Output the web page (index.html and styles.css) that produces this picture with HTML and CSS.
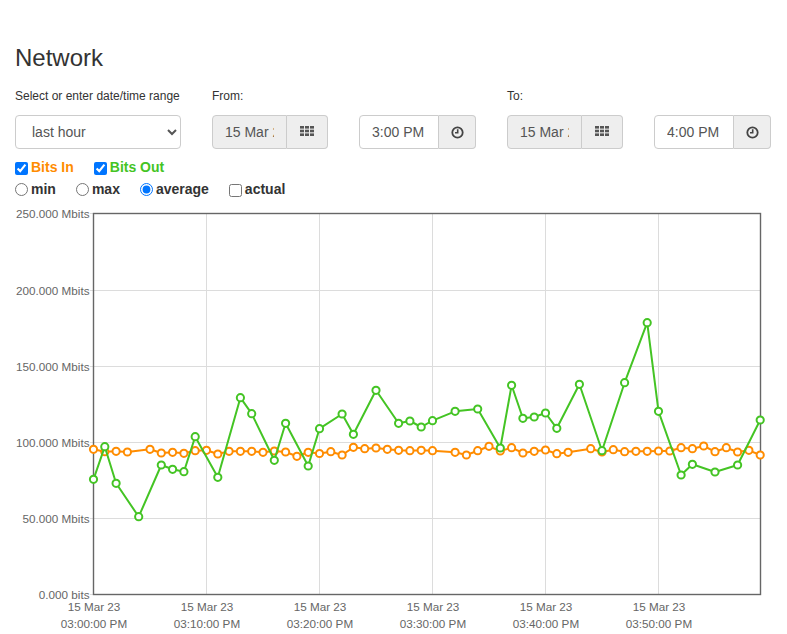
FILE: index.html
```html
<!DOCTYPE html>
<html>
<head>
<meta charset="utf-8">
<title>Network</title>
<link rel="stylesheet" href="styles.css">
</head>
<body>
<div class="page">
  <h1 class="title">Network</h1>
  <div class="controls">
    <div class="field">
      <label class="field-label">Select or enter date/time range</label>
      <select class="range-select">
        <option>last hour</option>
      </select>
    </div>
    <div class="field">
      <label class="field-label">From:</label>
      <div class="pair">
        <div class="igroup">
          <input class="date-input" type="text" value="15 Mar 2023" readonly>
          <span class="addon addon-date">
            <svg class="icon" width="14" height="10" viewBox="0 0 14 10"><g fill="#555"><rect x="0" y="0" width="4" height="2.6"/><rect x="5" y="0" width="4" height="2.6"/><rect x="10" y="0" width="4" height="2.6"/><rect x="0" y="3.7" width="4" height="2.6"/><rect x="5" y="3.7" width="4" height="2.6"/><rect x="10" y="3.7" width="4" height="2.6"/><rect x="0" y="7.4" width="4" height="2.6"/><rect x="5" y="7.4" width="4" height="2.6"/><rect x="10" y="7.4" width="4" height="2.6"/></g></svg>
          </span>
        </div>
        <div class="igroup">
          <input class="time-input" type="text" value="3:00 PM">
          <span class="addon addon-time">
            <svg class="icon" width="13" height="13" viewBox="0 0 13 13"><circle cx="6.5" cy="6.5" r="5.2" fill="none" stroke="#444" stroke-width="1.8"/><path d="M6.7 3.2 V6.8 H4" fill="none" stroke="#444" stroke-width="1.6"/></svg>
          </span>
        </div>
      </div>
    </div>
    <div class="field">
      <label class="field-label">To:</label>
      <div class="pair">
        <div class="igroup">
          <input class="date-input" type="text" value="15 Mar 2023" readonly>
          <span class="addon addon-date">
            <svg class="icon" width="14" height="10" viewBox="0 0 14 10"><g fill="#555"><rect x="0" y="0" width="4" height="2.6"/><rect x="5" y="0" width="4" height="2.6"/><rect x="10" y="0" width="4" height="2.6"/><rect x="0" y="3.7" width="4" height="2.6"/><rect x="5" y="3.7" width="4" height="2.6"/><rect x="10" y="3.7" width="4" height="2.6"/><rect x="0" y="7.4" width="4" height="2.6"/><rect x="5" y="7.4" width="4" height="2.6"/><rect x="10" y="7.4" width="4" height="2.6"/></g></svg>
          </span>
        </div>
        <div class="igroup">
          <input class="time-input" type="text" value="4:00 PM">
          <span class="addon addon-time">
            <svg class="icon" width="13" height="13" viewBox="0 0 13 13"><circle cx="6.5" cy="6.5" r="5.2" fill="none" stroke="#444" stroke-width="1.8"/><path d="M6.7 3.2 V6.8 H4" fill="none" stroke="#444" stroke-width="1.6"/></svg>
          </span>
        </div>
      </div>
    </div>
  </div>
  <div class="options">
    <div class="opt-row">
      <label class="opt"><input type="checkbox" class="cb" checked><span class="bits-in">Bits In</span></label>
      <label class="opt"><input type="checkbox" class="cb" checked><span class="bits-out">Bits Out</span></label>
    </div>
    <div class="opt-row">
      <label class="opt"><input type="radio" name="agg" class="rb"><span>min</span></label>
      <label class="opt"><input type="radio" name="agg" class="rb"><span>max</span></label>
      <label class="opt"><input type="radio" name="agg" class="rb" checked><span>average</span></label>
      <label class="opt"><input type="checkbox" class="cb"><span>actual</span></label>
    </div>
  </div>
</div>
<svg class="chart" width="787" height="433" viewBox="0 201 787 433">
  <defs>
    <marker id="mo" viewBox="-6 -6 12 12" markerWidth="12" markerHeight="12" refX="0" refY="0" markerUnits="userSpaceOnUse">
      <circle r="3.6" fill="#fff" stroke="#ff8c00" stroke-width="2"/>
    </marker>
    <marker id="mg" viewBox="-6 -6 12 12" markerWidth="12" markerHeight="12" refX="0" refY="0" markerUnits="userSpaceOnUse">
      <circle r="3.6" fill="#fff" stroke="#44c424" stroke-width="2"/>
    </marker>
  </defs>
  <g class="grid" stroke="#dcdcdc" stroke-width="1">
    <line x1="90" y1="290.5" x2="760" y2="290.5"/>
    <line x1="90" y1="366.5" x2="760" y2="366.5"/>
    <line x1="90" y1="442.5" x2="760" y2="442.5"/>
    <line x1="90" y1="518.5" x2="760" y2="518.5"/>
    <line x1="206.5" y1="214" x2="206.5" y2="594"/>
    <line x1="319.5" y1="214" x2="319.5" y2="594"/>
    <line x1="432.5" y1="214" x2="432.5" y2="594"/>
    <line x1="545.5" y1="214" x2="545.5" y2="594"/>
    <line x1="658.5" y1="214" x2="658.5" y2="594"/>
    <line x1="90" y1="213.5" x2="93" y2="213.5"/>
    <line x1="90" y1="594.5" x2="93" y2="594.5"/>
  </g>
  <rect x="93.5" y="213.5" width="667" height="381" fill="none" stroke="#666" stroke-width="1.4"/>
  <g class="ylabels" font-size="11.7" fill="#666" text-anchor="end">
    <text x="89.5" y="217.5">250.000 Mbits</text>
    <text x="89.5" y="294.5">200.000 Mbits</text>
    <text x="89.5" y="370.5">150.000 Mbits</text>
    <text x="89.5" y="446.5">100.000 Mbits</text>
    <text x="89.5" y="522.5">50.000 Mbits</text>
    <text x="89.5" y="598.5">0.000 bits</text>
  </g>
  <g class="xlabels" font-size="11.7" fill="#666" text-anchor="middle">
    <text x="94" y="611">15 Mar 23</text><text x="94" y="628">03:00:00 PM</text>
    <text x="207" y="611">15 Mar 23</text><text x="207" y="628">03:10:00 PM</text>
    <text x="320" y="611">15 Mar 23</text><text x="320" y="628">03:20:00 PM</text>
    <text x="433" y="611">15 Mar 23</text><text x="433" y="628">03:30:00 PM</text>
    <text x="546" y="611">15 Mar 23</text><text x="546" y="628">03:40:00 PM</text>
    <text x="659" y="611">15 Mar 23</text><text x="659" y="628">03:50:00 PM</text>
  </g>
  <polyline class="series" fill="none" stroke="#ff8c00" stroke-width="2" stroke-linejoin="round" marker-start="url(#mo)" marker-mid="url(#mo)" marker-end="url(#mo)"
    points="93.5,449.3 104.8,451.7 116.1,451.3 127.4,452 150,449.3 161.3,453 172.6,452.3 183.9,453.3 195.2,450.7 206.5,450.3 217.8,454 229.1,451.3 240.4,451.3 251.7,451.3 263,452.3 274.3,451 285.6,452 296.9,456.3 308.2,452.3 319.5,453.5 330.8,451.7 342.1,455 353.4,447.3 364.7,448.7 376,448 387.3,449.3 398.6,450.3 409.9,450.7 421.2,450.3 432.5,450.7 455.1,452.3 466.4,455 477.7,450.7 489,446.3 500.3,451 511.6,447.7 522.9,453 534.2,451.3 545.5,450 556.8,453.7 568.1,452.3 590.7,448.7 602,452 613.3,449.7 624.6,451.7 635.9,451.3 647.2,451.3 658.5,451 669.8,451 681.1,447.7 692.4,448.7 703.7,446 715,451.7 726.3,447.7 737.6,452 748.9,450.3 760.2,455"/>
  <polyline class="series" fill="none" stroke="#44c424" stroke-width="2" stroke-linejoin="round" marker-start="url(#mg)" marker-mid="url(#mg)" marker-end="url(#mg)"
    points="93.5,479.3 104.8,446.7 116.1,483.3 138.7,516.7 161.3,465 172.6,469.3 183.9,471.7 195.2,436.7 217.8,477.3 240.4,397.7 251.7,413.7 274.3,460.3 285.6,423.3 308.2,466 319.5,428.7 342.1,414 353.4,434.3 376,390.3 398.6,423.3 409.9,421 421.2,427 432.5,420.7 455.1,411.3 477.7,409 500.3,448 511.6,385.3 522.9,418.3 534.2,417 545.5,413 556.8,428.3 579.4,384.3 602,450.7 624.6,382.7 647.2,322.7 658.5,411.3 681.1,475 692.4,464.3 715,472 737.6,465 760.2,420"/>
</svg>
</body>
</html>
```

FILE: styles.css
```css
html, body {
  margin: 0;
  padding: 0;
  background: #fff;
}

body {
  font-family: "Liberation Sans", Arial, sans-serif;
  color: #333;
  font-size: 14px;
}

.page {
  padding: 45px 15px 0 15px;
}

.title {
  margin: 0;
  font-size: 24px;
  line-height: 1.1;
  font-weight: 400;
  color: #333;
}

.controls {
  display: flex;
  gap: 31px;
  margin-top: 17px;
}

.field {
  display: flex;
  flex-direction: column;
}

.field-label {
  display: block;
  font-size: 12px;
  line-height: 17px;
  height: 17px;
  margin-bottom: 9.6px;
  font-weight: 400;
}

.pair {
  display: flex;
  gap: 31px;
}

.range-select {
  width: 166px;
  height: 34px;
  box-sizing: border-box;
  padding: 6px 12px;
  font-family: "Liberation Sans", Arial, sans-serif;
  font-size: 14px;
  color: #555;
  background: #fff;
  border: 1px solid #ccc;
  border-radius: 4px;
}

.igroup {
  display: flex;
  height: 34px;
}

.igroup input {
  box-sizing: border-box;
  height: 34px;
  margin: 0;
  padding: 6px 12px;
  font-family: "Liberation Sans", Arial, sans-serif;
  font-size: 14px;
  color: #555;
  border: 1px solid #ccc;
  border-radius: 4px 0 0 4px;
  outline: none;
}

.date-input {
  width: 75px;
  background: #eee;
}

.time-input {
  width: 80px;
  background: #fff;
}

.addon {
  box-sizing: border-box;
  height: 34px;
  display: flex;
  align-items: center;
  justify-content: center;
  background: #eee;
  border: 1px solid #ccc;
  border-left: 0;
  border-radius: 0 4px 4px 0;
}

.addon-date {
  width: 41px;
}

.addon-time {
  width: 37px;
}

.icon {
  display: block;
}

.addon-date .icon {
  margin-top: -2px;
}

.addon-time .icon {
  margin-top: 1px;
}

.options {
  margin-top: 7px;
}

.opt-row {
  display: flex;
  gap: 20px;
  line-height: 22.5px;
  height: 22.5px;
  font-size: 14px;
  font-weight: 700;
}

.opt {
  display: inline-flex;
  align-items: baseline;
  white-space: nowrap;
}

.cb {
  width: 13px;
  height: 13px;
  margin: 0 3px 0 0;
  position: relative;
  top: 3px;
}

.rb {
  width: 13px;
  height: 13px;
  margin: 0 3px 0 0;
  position: relative;
  top: 1.5px;
}

.bits-in {
  color: #ff8c00;
}

.bits-out {
  color: #44c424;
}

.chart {
  display: block;
  font-family: "Liberation Sans", Arial, sans-serif;
}
```
